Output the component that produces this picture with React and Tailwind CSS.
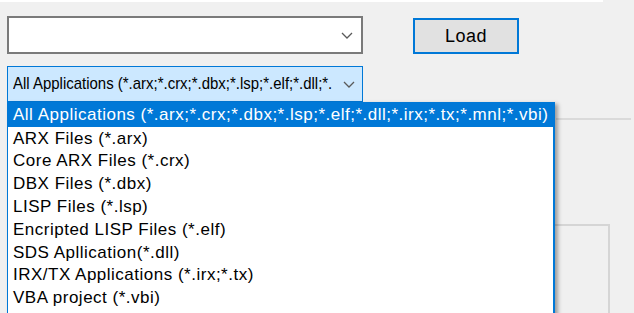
import React from 'react';

const items = [
  'All Applications (*.arx;*.crx;*.dbx;*.lsp;*.elf;*.dll;*.irx;*.tx;*.mnl;*.vbi)',
  'ARX Files (*.arx)',
  'Core ARX Files (*.crx)',
  'DBX Files (*.dbx)',
  'LISP Files (*.lsp)',
  'Encripted LISP Files (*.elf)',
  'SDS Apllication(*.dll)',
  'IRX/TX Applications (*.irx;*.tx)',
  'VBA project (*.vbi)',
];

const Chevron = () => (
  <svg width="12" height="7" viewBox="0 0 12 7" className="shrink-0">
    <path d="M1 1 L6 6 L11 1" fill="none" stroke="#5a5a5a" strokeWidth="1.3" />
  </svg>
);

const App = () => {
  return (
    <div
      className="relative w-[634px] h-[313px] overflow-hidden bg-[#f0f0f0] text-[17px] text-black tracking-[0.5px]"
      style={{ fontFamily: '"Liberation Sans", Arial, sans-serif' }}
    >
      <div className="h-[2px] w-[603px] bg-white" />

      {/* top row: path combo + Load */}
      <div className="flex items-start mt-[14px] pl-[7px]">
        <div className="w-[356px] h-[38px] border-2 border-[#7a7a7a] bg-white flex items-center justify-end pr-[8px]">
          <Chevron />
        </div>
        <button className="ml-[50px] mt-[2px] w-[106px] h-[36px] border-2 border-[#0078d7] bg-[#e1e1e1] flex items-center justify-center text-[18px]">
          Load
        </button>
      </div>

      {/* filter combo */}
      <div className="mt-[12px] ml-[7px] w-[356px] h-[36px] border border-[#0078d7] bg-[#cce8ff] flex items-center pl-[5px] pr-[7px]">
        <div className="flex-1 min-w-0">
          <span className="inline-block whitespace-nowrap tracking-normal scale-x-[0.88] origin-left">
            All Applications (*.arx;*.crx;*.dbx;*.lsp;*.elf;*.dll;*.
          </span>
        </div>
        <Chevron />
      </div>

      {/* background content behind popup */}
      <div className="flex justify-end mt-[16px] pr-[3px]">
        <div className="w-[75px] h-[2px] bg-[#dadada]" />
      </div>
      <div className="mt-[104px] ml-[20px] w-[590px] h-[120px] border-2 border-[#d5d5d5]" />

      {/* dropdown list */}
      <div className="absolute left-[7px] top-[102px] w-[548px] h-[230px] bg-white border-l border-r-2 border-t border-[#0078d7] shadow-[3px_2px_4px_rgba(0,0,0,0.35)]">
        {items.map((t, i) => (
          <div
            key={i}
            className={
              i === 0
                ? 'h-[24px] flex items-center pl-[5px] bg-[#0078d7] text-white whitespace-nowrap'
                : 'h-[22.8px] flex items-center pl-[5px] whitespace-nowrap'
            }
          >
            {t}
          </div>
        ))}
      </div>
    </div>
  );
};

export default App;
